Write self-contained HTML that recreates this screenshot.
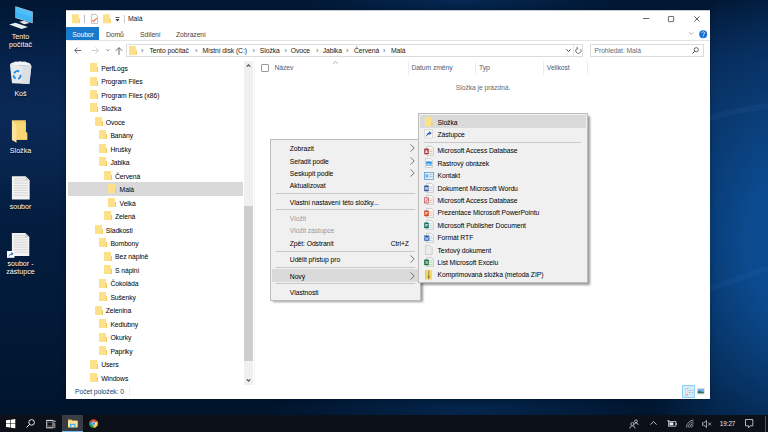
<!DOCTYPE html>
<html><head><meta charset="utf-8">
<style>
*{margin:0;padding:0;box-sizing:border-box}
html,body{width:768px;height:432px;overflow:hidden}
body{position:relative;font-family:"Liberation Sans",sans-serif;font-size:6.8px;letter-spacing:-0.08px;color:#000;
background:radial-gradient(ellipse 200px 30px at 470px 410px,rgba(5,42,85,0.8) 0%,rgba(5,42,85,0) 100%),radial-gradient(ellipse 160px 25px at 460px 0px,rgba(6,44,90,0.8) 0%,rgba(6,44,90,0) 100%),radial-gradient(ellipse 200px 270px at 805px 240px,rgba(12,77,146,1) 0%,rgba(11,74,142,1) 30%,rgba(9,62,120,0.75) 60%,rgba(8,40,80,0) 100%),linear-gradient(180deg,#011733 0px,#06234c 60px,#0a2955 115px,#07244c 170px,#041d40 216px,#021a38 320px,#00142c 414px)}
.a{position:absolute;white-space:nowrap}
svg{position:absolute;overflow:visible}
/* desktop */
.dl{color:#fff;text-align:center;width:41px;line-height:8.4px;font-size:7.1px;letter-spacing:0;text-shadow:0 0.5px 1px rgba(0,0,0,0.8)}
/* window */
#win{position:absolute;left:66px;top:10px;width:644px;height:389px;background:#fff;border-top:1px solid #c8ccd0;box-shadow:0 0 6px rgba(0,0,0,0.25)}
.tab{line-height:13px;color:#444}
.nav{line-height:13.5px;color:#000}
.mi{line-height:13.2px;color:#000}
.dis{color:#9a9a9a}
.fo{position:absolute;width:7px;height:9px;background:#fde08a}
.fo:after{content:"";position:absolute;left:7px;top:4px;width:1px;height:5px;background:#f0c860}
.bc{top:44.5px;line-height:12.5px;color:#555;font-size:7.4px}
.bct{top:44.5px;line-height:12.5px;color:#1a1a1a}
.hd{top:62px;line-height:12px;color:#4c607a}
.sep{position:absolute;height:1px;background:#c8c8c8}
</style></head><body>

<svg style="left:700px;top:60px" width="68" height="260" viewBox="0 0 68 260"><path d="M0,62 Q30,50 68,46" fill="none" stroke="rgba(110,170,240,0.06)" stroke-width="6"/><path d="M0,232 Q34,220 68,208" fill="none" stroke="rgba(110,170,240,0.06)" stroke-width="6"/></svg>
<!-- Desktop icons -->
<svg style="left:5px;top:3px" width="32" height="30" viewBox="0 0 32 30">
  <polygon points="10.4,3.3 27.8,8.8 27.6,20.3 10.4,15.1" fill="#c8d4de"/>
  <polygon points="10.9,4 27.3,9.2 27.1,19.6 10.9,14.6" fill="#40b5f5"/>
  <polygon points="10.9,4 27.3,9.2 27.1,14 10.9,9" fill="#5cc4fa" opacity="0.6"/>
  <polygon points="14.2,18.75 19.1,17.7 24.65,20.1 19.1,21.2" fill="#e4e8ec"/>
  <polygon points="4.2,21.5 10.4,19.8 22.9,24 16.7,26" fill="#e9ecef"/>
</svg>
<div class="a dl" style="left:0px;top:33px">Tento<br>počítač</div>

<svg style="left:5px;top:58px" width="32" height="30" viewBox="0 0 32 30">
  <polygon points="4.9,6.6 26.4,8 24.3,26 7,25.3" fill="#e6e9ec"/>
  <polygon points="17,7.4 26.4,8 24.3,26 17,25.6" fill="#dce0e4"/>
  <path d="M5,6.8 Q6,4.5 8.5,4.6 Q10,3 12.5,3.8 Q15,2.6 17.5,3.8 Q20,3 22,4.6 Q25,4.6 26.4,8Z" fill="#f4f5f6"/>
  <g fill="none" stroke="#1b88e2" stroke-width="1.8">
    <path d="M9.2,15.3 A3.9,3.9 0 0 1 14.2,13.3"/>
    <path d="M15.6,16.8 A3.9,3.9 0 0 1 13.2,20.8"/>
    <path d="M10.6,20.6 A3.9,3.9 0 0 1 8.7,17.2"/>
  </g>
</svg>
<div class="a dl" style="left:0px;top:89.5px">Koš</div>

<svg style="left:5px;top:115px" width="32" height="30" viewBox="0 0 32 30">
  <polygon points="6.9,5.2 20.8,5.2 20.8,17 22.2,18 22.2,24.7 11.1,24.7" fill="#f3cf66"/>
  <polygon points="11.5,8 20.8,8 20.8,17 22.2,18 22.2,24.7 11.5,24.7" fill="#f7d673"/>
  <polygon points="6.9,5.5 11.5,9 11.5,27.8 6.9,25" fill="#fde49c"/>
</svg>
<div class="a dl" style="left:0px;top:146.5px">Složka</div>

<svg style="left:11px;top:176px" width="19" height="24" viewBox="0 0 19 24">
  <polygon points="0.9,0.2 14.5,0.2 18.65,4.3 18.65,23.4 0.9,23.4" fill="#f3f3f3"/>
  <polygon points="14.5,0.2 18.65,4.3 14.5,4.3" fill="#d0d0d0"/>
  <g stroke="#d2d2d2" stroke-width="0.9"><line x1="2.9" y1="2.6" x2="14" y2="2.6"/><line x1="2.9" y1="4.7" x2="16.9" y2="4.7"/><line x1="2.9" y1="7.1" x2="16.9" y2="7.1"/><line x1="2.9" y1="9.6" x2="16.9" y2="9.6"/><line x1="2.9" y1="12" x2="16.9" y2="12"/><line x1="2.9" y1="14.4" x2="16.9" y2="14.4"/><line x1="2.9" y1="16.8" x2="16.9" y2="16.8"/><line x1="2.9" y1="19.3" x2="16.9" y2="19.3"/></g>
</svg>
<div class="a dl" style="left:0px;top:203px">soubor</div>

<svg style="left:11px;top:233px" width="19" height="24" viewBox="0 0 19 24">
  <polygon points="0.9,0 14.2,0 18.3,4.1 18.3,23 0.9,23" fill="#f3f3f3"/>
  <polygon points="14.2,0 18.3,4.1 14.2,4.1" fill="#d0d0d0"/>
  <g stroke="#d2d2d2" stroke-width="0.9"><line x1="2.9" y1="2.4" x2="14" y2="2.4"/><line x1="2.9" y1="4.5" x2="16.6" y2="4.5"/><line x1="2.9" y1="6.9" x2="16.6" y2="6.9"/><line x1="2.9" y1="9.4" x2="16.6" y2="9.4"/><line x1="2.9" y1="11.8" x2="16.6" y2="11.8"/><line x1="2.9" y1="14.2" x2="16.6" y2="14.2"/><line x1="2.9" y1="16.6" x2="16.6" y2="16.6"/><line x1="2.9" y1="19.1" x2="16.6" y2="19.1"/></g>
</svg>
<svg style="left:7px;top:251px" width="8" height="7" viewBox="0 0 8 7"><rect x="0" y="0" width="7.5" height="6.8" fill="#fff"/><path d="M1.5,6 Q1.8,2.8 4.5,2.5 L4.2,1 L6.6,2.6 L4.6,4.6 L4.5,3.6 Q2.8,3.8 1.5,6Z" fill="#1e66c8"/></svg>
<div class="a dl" style="left:0px;top:260px">soubor -<br>zástupce</div>

<!-- Explorer window -->
<div id="win"></div>
<!-- title bar -->
<svg style="left:72.3px;top:14.4px" width="9" height="10" viewBox="0 0 9 9.4"><rect x="0" y="0" width="6.8" height="9" fill="#fde08a"/><rect x="6.8" y="4.2" width="1" height="4.8" fill="#f0c860"/></svg>
<div class="a" style="left:84px;top:15px;width:1px;height:8px;background:#bbb"></div>
<svg style="left:91px;top:14.3px" width="7" height="10" viewBox="0 0 7 10"><polygon points="0.4,0.4 5,0.4 6.6,2 6.6,9.4 0.4,9.4" fill="#fff" stroke="#a8a8a8" stroke-width="0.7"/><path d="M1.2,6.2 L2.6,7.4 L5.8,4.2" fill="none" stroke="#f0703a" stroke-width="1.1"/></svg>
<svg style="left:103px;top:14.4px" width="9" height="10" viewBox="0 0 9 9.4"><rect x="0" y="0" width="6.8" height="9" fill="#fde08a"/><rect x="6.8" y="4.2" width="1" height="4.8" fill="#f0c860"/></svg>
<svg style="left:115px;top:17px" width="5" height="5" viewBox="0 0 5 5"><rect x="0.5" y="0" width="4" height="0.8" fill="#333"/><polygon points="0.5,2 4.5,2 2.5,4.5" fill="#333"/></svg>
<div class="a" style="left:124px;top:15px;width:1px;height:8px;background:#ccc"></div>
<div class="a" style="left:128px;top:12px;line-height:13px;color:#222">Malá</div>
<svg style="left:642.5px;top:18.3px" width="7" height="2" viewBox="0 0 7 2"><rect x="0" y="0.15" width="6.2" height="0.8" fill="#444"/></svg>
<svg style="left:667.6px;top:15.6px" width="7" height="7" viewBox="0 0 7 7"><rect x="0.45" y="0.45" width="5.2" height="5.2" rx="0.4" fill="none" stroke="#444" stroke-width="0.8"/></svg>
<svg style="left:693.5px;top:15.7px" width="7" height="7" viewBox="0 0 7 7"><path d="M0.3,0.3 L5.6,5.6 M5.6,0.3 L0.3,5.6" stroke="#333" stroke-width="0.8"/></svg>
<!-- ribbon tabs -->
<div class="a" style="left:66px;top:27px;width:32.5px;height:13px;background:#1979ca"></div>
<div class="a tab" style="left:72.3px;top:27.5px;color:#fff">Soubor</div>
<div class="a tab" style="left:106px;top:27.5px">Domů</div>
<div class="a tab" style="left:140px;top:27.5px">Sdílení</div>
<div class="a tab" style="left:176px;top:27.5px">Zobrazení</div>
<svg style="left:688.6px;top:32.3px" width="5" height="3" viewBox="0 0 5 3"><path d="M0.3,0.3 L2.3,2.4 L4.4,0.3" fill="none" stroke="#999" stroke-width="0.8"/></svg>
<svg style="left:699px;top:30px" width="9" height="9" viewBox="0 0 9 9"><circle cx="4.2" cy="4.2" r="4" fill="#1a73d2"/><path d="M2.9,3.2 Q2.9,1.8 4.3,1.8 Q5.7,1.8 5.7,3.1 Q5.7,3.9 4.6,4.5 L4.4,5.9" fill="none" stroke="#d8eafc" stroke-width="0.75"/><circle cx="4.4" cy="6.9" r="0.45" fill="#d8eafc"/></svg>
<div class="a" style="left:67px;top:40px;width:643px;height:1px;background:#e4e4e4"></div>
<!-- address bar -->
<svg style="left:73.8px;top:47px" width="8" height="7" viewBox="0 0 8 7"><path d="M7.2,3.5 L0.9,3.5 M3.5,0.7 L0.7,3.5 L3.5,6.3" fill="none" stroke="#6a6a6a" stroke-width="1"/></svg>
<svg style="left:91px;top:47px" width="8" height="7" viewBox="0 0 8 7"><path d="M0.5,3.5 L7.2,3.5 M4.5,0.5 L7.5,3.5 L4.5,6.5" fill="none" stroke="#c8c8c8" stroke-width="0.9"/></svg>
<svg style="left:106px;top:49.4px" width="4" height="3" viewBox="0 0 4 3"><path d="M0.5,0.5 L1.8,1.8 L3.1,0.5" fill="none" stroke="#666" stroke-width="0.9"/></svg>
<svg style="left:115px;top:47px" width="8" height="8" viewBox="0 0 8 8"><path d="M4,7.8 L4,0.8 M0.8,3.8 L4,0.6 L7.2,3.8" fill="none" stroke="#555" stroke-width="0.9"/></svg>
<div class="a" style="left:126px;top:44px;width:457px;height:13px;border:1px solid #dcdcdc"></div>
<svg style="left:129px;top:46px" width="9" height="9" viewBox="0 0 9 9"><rect x="0" y="0" width="6.8" height="9" fill="#fde08a"/><rect x="6.8" y="4.2" width="1" height="4.8" fill="#f0c860"/></svg>
<div class="a" style="left:572.5px;top:45px;width:1px;height:11.5px;background:#e6e6e6"></div>
<svg style="left:566px;top:49.2px" width="5" height="3" viewBox="0 0 5 3"><path d="M0.4,0.4 L2.5,2.5 L4.6,0.4" fill="none" stroke="#444" stroke-width="0.95"/></svg>
<svg style="left:575px;top:46.5px" width="7" height="7" viewBox="0 0 7 7"><path d="M5.6,2.2 A2.7,2.7 0 1 1 2.2,1.3" fill="none" stroke="#555" stroke-width="0.8"/><path d="M1.5,0 L3.2,1.3 L1.6,2.8" fill="none" stroke="#555" stroke-width="0.8"/></svg>
<div class="a" style="left:589.5px;top:44px;width:114px;height:13px;border:1px solid #dcdcdc"></div>
<div class="a" style="left:594.5px;top:44.5px;line-height:12.5px;color:#6d6d6d">Prohledat: Malá</div>
<svg style="left:692px;top:47px" width="7" height="7" viewBox="0 0 7 7"><circle cx="4.3" cy="2.7" r="2.1" fill="none" stroke="#444" stroke-width="0.8"/><path d="M2.8,4.2 L0.5,6.5" stroke="#444" stroke-width="0.9"/></svg>
<!-- breadcrumb -->
<div class="a bc" style="left:141px">›</div>
<div class="a bct" style="left:149.4px">Tento počítač</div>
<div class="a bc" style="left:195px">›</div>
<div class="a bct" style="left:202.5px">Místní disk (C:)</div>
<div class="a bc" style="left:252.5px">›</div>
<div class="a bct" style="left:259.8px">Složka</div>
<div class="a bc" style="left:284.5px">›</div>
<div class="a bct" style="left:290.8px">Ovoce</div>
<div class="a bc" style="left:316px">›</div>
<div class="a bct" style="left:322.7px">Jablka</div>
<div class="a bc" style="left:346px">›</div>
<div class="a bct" style="left:354px">Červená</div>
<div class="a bc" style="left:383px">›</div>
<div class="a bct" style="left:391px">Malá</div>
<!-- nav pane -->
<div class="a" style="left:68px;top:182px;width:175px;height:13.5px;background:#d9d9d9"></div>
<div class="fo" style="left:90.0px;top:63.0px"></div><div class="a nav" style="left:101.2px;top:61.7px">PerfLogs</div>
<div class="fo" style="left:90.0px;top:76.5px"></div><div class="a nav" style="left:101.2px;top:75.2px">Program Files</div>
<div class="fo" style="left:90.0px;top:90.0px"></div><div class="a nav" style="left:101.2px;top:88.7px">Program Files (x86)</div>
<div class="fo" style="left:90.0px;top:103.4px"></div><div class="a nav" style="left:101.2px;top:102.1px">Složka</div>
<div class="fo" style="left:94.6px;top:116.9px"></div><div class="a nav" style="left:105.8px;top:115.6px">Ovoce</div>
<div class="fo" style="left:99.2px;top:130.4px"></div><div class="a nav" style="left:110.4px;top:129.1px">Banány</div>
<div class="fo" style="left:99.2px;top:143.9px"></div><div class="a nav" style="left:110.4px;top:142.6px">Hrušky</div>
<div class="fo" style="left:99.2px;top:157.4px"></div><div class="a nav" style="left:110.4px;top:156.1px">Jablka</div>
<div class="fo" style="left:103.8px;top:170.8px"></div><div class="a nav" style="left:115.0px;top:169.5px">Červená</div>
<div class="fo" style="left:108.4px;top:184.3px"></div><div class="a nav" style="left:119.6px;top:183.0px">Malá</div>
<div class="fo" style="left:108.4px;top:197.8px"></div><div class="a nav" style="left:119.6px;top:196.5px">Velká</div>
<div class="fo" style="left:103.8px;top:211.3px"></div><div class="a nav" style="left:115.0px;top:210.0px">Zelená</div>
<div class="fo" style="left:94.6px;top:224.8px"></div><div class="a nav" style="left:105.8px;top:223.5px">Sladkosti</div>
<div class="fo" style="left:99.2px;top:238.2px"></div><div class="a nav" style="left:110.4px;top:236.9px">Bombony</div>
<div class="fo" style="left:103.8px;top:251.7px"></div><div class="a nav" style="left:115.0px;top:250.4px">Bez náplně</div>
<div class="fo" style="left:103.8px;top:265.2px"></div><div class="a nav" style="left:115.0px;top:263.9px">S náplní</div>
<div class="fo" style="left:99.2px;top:278.7px"></div><div class="a nav" style="left:110.4px;top:277.4px">Čokoláda</div>
<div class="fo" style="left:99.2px;top:292.2px"></div><div class="a nav" style="left:110.4px;top:290.9px">Sušenky</div>
<div class="fo" style="left:94.6px;top:305.6px"></div><div class="a nav" style="left:105.8px;top:304.3px">Zelenina</div>
<div class="fo" style="left:99.2px;top:319.1px"></div><div class="a nav" style="left:110.4px;top:317.8px">Kedlubny</div>
<div class="fo" style="left:99.2px;top:332.6px"></div><div class="a nav" style="left:110.4px;top:331.3px">Okurky</div>
<div class="fo" style="left:99.2px;top:346.1px"></div><div class="a nav" style="left:110.4px;top:344.8px">Papriky</div>
<div class="fo" style="left:90.0px;top:359.6px"></div><div class="a nav" style="left:101.2px;top:358.3px">Users</div>
<div class="fo" style="left:90.0px;top:373.0px"></div><div class="a nav" style="left:101.2px;top:371.7px">Windows</div>
<div class="a" style="left:244px;top:61px;width:9px;height:324px;background:#f0f0f0"></div>
<div class="a" style="left:244px;top:205.5px;width:9px;height:155px;background:#cdcdcd"></div>
<svg style="left:246.3px;top:64.2px" width="5" height="3" viewBox="0 0 5 3"><path d="M0.7,2.6 L2.5,0.8 L4.3,2.6" fill="none" stroke="#505050" stroke-width="1.2"/></svg>
<svg style="left:246.3px;top:378.8px" width="5" height="3" viewBox="0 0 5 3"><path d="M0.7,0.4 L2.5,2.2 L4.3,0.4" fill="none" stroke="#505050" stroke-width="1.2"/></svg>
<div class="a" style="left:253.5px;top:58px;width:1px;height:327px;background:#f4f4f4"></div>
<!-- content header -->
<div class="a" style="left:260.5px;top:64px;width:8.5px;height:8px;border:1px solid #9a9a9a;background:#fff;border-radius:1px"></div>
<div class="a hd" style="left:274.4px">Název</div>
<svg style="left:332.5px;top:61px" width="5" height="3" viewBox="0 0 5 3"><path d="M0.3,2.7 L2.5,0.5 L4.7,2.7" fill="none" stroke="#888" stroke-width="0.7"/></svg>
<div class="a" style="left:407.5px;top:60.5px;width:1px;height:14px;background:#ececec"></div>
<div class="a hd" style="left:411.5px">Datum změny</div>
<div class="a" style="left:475px;top:60.5px;width:1px;height:14px;background:#ececec"></div>
<div class="a hd" style="left:479px">Typ</div>
<div class="a" style="left:542.5px;top:60.5px;width:1px;height:14px;background:#ececec"></div>
<div class="a hd" style="left:546.8px">Velikost</div>
<div class="a" style="left:587px;top:60.5px;width:1px;height:14px;background:#ececec"></div>
<div class="a" style="left:455.8px;top:81.5px;line-height:12px;color:#6d6d6d">Složka je prázdná.</div>
<!-- status bar -->
<div class="a" style="left:75px;top:385.5px;line-height:12px;color:#1e3f6a">Počet položek: 0</div>
<div class="a" style="left:129px;top:387px;width:1px;height:9px;background:#eee"></div>
<div class="a" style="left:682.2px;top:385px;width:12.8px;height:13.4px;background:#d5ecfb;border:1px solid #8fd0f6"></div>
<svg style="left:684.5px;top:387.5px" width="9" height="9" viewBox="0 0 9 9"><rect x="0.4" y="0.4" width="2.4" height="7.4" fill="#eef4f8" stroke="#b8bcc0" stroke-width="0.5"/><rect x="0.9" y="5.8" width="1.4" height="1.6" fill="#f0b0a8"/><g fill="#a0a8b0"><rect x="3.6" y="2" width="2" height="0.6"/><rect x="6.4" y="2" width="2" height="0.6"/><rect x="3.6" y="4" width="2" height="0.6"/><rect x="6.4" y="4" width="2" height="0.6"/></g><g fill="#c8d0d8"><rect x="3.6" y="6" width="2" height="0.5"/><rect x="6.4" y="6" width="2" height="0.5"/></g></svg>
<svg style="left:697px;top:388px" width="8" height="6.5" viewBox="0 0 8 6.5"><rect x="0" y="0" width="8" height="6.5" fill="#e4e4e4"/><rect x="0.8" y="0.9" width="6.2" height="4.3" fill="#6eb0e8"/><path d="M0.8,3.2 Q3,2.6 7,4.6 L7,5.2 L0.8,5.2Z" fill="#3a6a50"/></svg>
<!-- context menu -->
<div class="a" style="left:273px;top:142px;width:150px;height:160px;background:rgba(0,0,0,0.4);filter:blur(0.8px)"></div>
<div class="a" style="left:270px;top:139px;width:151px;height:161.5px;background:#f0f0f0;border:1px solid #bcbcbc"></div>
<div class="a" style="left:271.5px;top:269px;width:148px;height:12.6px;background:#dadada"></div>
<div class="a mi" style="left:289.8px;top:142.1px">Zobrazit</div>
<svg style="left:410.3px;top:144.2px" width="5" height="8" viewBox="0 0 5 8"><path d="M0.6,0.4 L4.2,4 L0.6,7.6" fill="none" stroke="#5c5c78" stroke-width="0.85"/></svg>
<div class="a mi" style="left:289.8px;top:154.5px">Seřadit podle</div>
<svg style="left:410.3px;top:156.6px" width="5" height="8" viewBox="0 0 5 8"><path d="M0.6,0.4 L4.2,4 L0.6,7.6" fill="none" stroke="#5c5c78" stroke-width="0.85"/></svg>
<div class="a mi" style="left:289.8px;top:167.0px">Seskupit podle</div>
<svg style="left:410.3px;top:169.1px" width="5" height="8" viewBox="0 0 5 8"><path d="M0.6,0.4 L4.2,4 L0.6,7.6" fill="none" stroke="#5c5c78" stroke-width="0.85"/></svg>
<div class="a mi" style="left:289.8px;top:179.4px">Aktualizovat</div>
<div class="a mi" style="left:289.8px;top:195.9px">Vlastní nastavení této složky...</div>
<div class="a mi" style="left:289.8px;top:253.1px">Udělit přístup pro</div>
<svg style="left:410.3px;top:255.2px" width="5" height="8" viewBox="0 0 5 8"><path d="M0.6,0.4 L4.2,4 L0.6,7.6" fill="none" stroke="#5c5c78" stroke-width="0.85"/></svg>
<div class="a mi" style="left:289.8px;top:269.5px">Nový</div>
<svg style="left:410.3px;top:271.6px" width="5" height="8" viewBox="0 0 5 8"><path d="M0.6,0.4 L4.2,4 L0.6,7.6" fill="none" stroke="#5c5c78" stroke-width="0.85"/></svg>
<div class="a mi" style="left:289.8px;top:285.6px">Vlastnosti</div>
<div class="a mi dis" style="left:289.8px;top:212.0px">Vložit</div>
<div class="a mi dis" style="left:289.8px;top:224.4px">Vložit zástupce</div>
<div class="a mi" style="left:289.8px;top:236.8px">Zpět: Odstranit</div>
<div class="a mi" style="left:390.7px;top:236.8px">Ctrl+Z</div>
<div class="sep" style="left:276px;top:193.0px;width:139px"></div>
<div class="sep" style="left:276px;top:209.3px;width:139px"></div>
<div class="sep" style="left:276px;top:250.7px;width:139px"></div>
<div class="sep" style="left:276px;top:267.0px;width:139px"></div>
<div class="sep" style="left:276px;top:282.7px;width:139px"></div>
<!-- submenu -->
<div class="a" style="left:420.5px;top:116px;width:169px;height:168.5px;background:rgba(0,0,0,0.4);filter:blur(0.8px)"></div>
<div class="a" style="left:417.5px;top:113px;width:170.5px;height:170px;background:#f0f0f0;border:1px solid #bcbcbc"></div>
<div class="a" style="left:420px;top:115.4px;width:166px;height:12.3px;background:#dadada"></div>
<div class="sep" style="left:424px;top:141.5px;width:157px"></div>
<svg style="left:424.90000000000003px;top:117.3px" width="8" height="10" viewBox="0 0 8 10"><rect x="0" y="0" width="6.5" height="9.4" fill="#fde08a"/><rect x="6.5" y="4" width="1" height="5.4" fill="#f0c860"/></svg>
<svg style="left:424.40000000000003px;top:129.0px" width="9" height="10" viewBox="0 0 9 10"><rect x="0.4" y="0.4" width="8.2" height="8.6" fill="#f6f6f6" stroke="#cfcfcf" stroke-width="0.6"/><path d="M2.2,8 Q2.3,4.2 5.3,3.6 L5,2 L7.6,4 L5.4,6.3 L5.3,5 Q3.5,5.3 2.2,8Z" fill="#1e5fb4"/></svg>
<svg style="left:423.8px;top:145.7px" width="10" height="10" viewBox="0 0 10 10"><polygon points="2.6,0.4 7.6,0.4 9.4,2.2 9.4,9.4 2.6,9.4" fill="#f8f8f8" stroke="#b4b4b4" stroke-width="0.6"/><rect x="5.4" y="3.6" width="3" height="0.6" fill="#e0a0a0"/><rect x="5.4" y="5.4" width="3" height="0.6" fill="#e0a0a0"/><rect x="5.4" y="7.2" width="3" height="0.6" fill="#e0a0a0"/><rect x="0.2" y="2.6" width="4.6" height="5.6" rx="0.4" fill="#a4373a"/><text x="2.5" y="6.9" font-size="4" font-family="Liberation Sans" font-weight="bold" fill="#fff" text-anchor="middle">A</text></svg>
<svg style="left:425.0px;top:158.1px" width="8" height="10" viewBox="0 0 8 10"><polygon points="0.4,0.4 5.2,0.4 7.4,2.6 7.4,9.4 0.4,9.4" fill="#fafafa" stroke="#b4b4b4" stroke-width="0.6"/><rect x="1.2" y="3.4" width="5.4" height="4.4" fill="#2a8ae0"/><path d="M1.2,6.2 L3.5,5 L6.6,6.5 L6.6,7.8 L1.2,7.8Z" fill="#9fd0f8"/></svg>
<svg style="left:423.8px;top:172.0px" width="10" height="8" viewBox="0 0 10 8"><rect x="0.4" y="0.4" width="9.2" height="7" fill="#e4f1fa" stroke="#4a90c8" stroke-width="0.7"/><rect x="1.5" y="2.2" width="2.8" height="3.4" fill="#7ab0dc"/><rect x="5.2" y="2.4" width="3.4" height="0.7" fill="#7ab0dc"/><rect x="5.2" y="4.4" width="3.4" height="0.7" fill="#7ab0dc"/></svg>
<svg style="left:423.8px;top:182.9px" width="10" height="10" viewBox="0 0 10 10"><polygon points="2.6,0.4 7.6,0.4 9.4,2.2 9.4,9.4 2.6,9.4" fill="#f8f8f8" stroke="#b4b4b4" stroke-width="0.6"/><rect x="5.4" y="3.6" width="3" height="0.6" fill="#a8bcdc"/><rect x="5.4" y="5.4" width="3" height="0.6" fill="#a8bcdc"/><rect x="5.4" y="7.2" width="3" height="0.6" fill="#a8bcdc"/><rect x="0.2" y="2.6" width="4.6" height="5.6" rx="0.4" fill="#2b579a"/><text x="2.5" y="6.9" font-size="4" font-family="Liberation Sans" font-weight="bold" fill="#fff" text-anchor="middle">W</text></svg>
<svg style="left:423.8px;top:195.3px" width="10" height="10" viewBox="0 0 10 10"><polygon points="2.6,0.4 7.6,0.4 9.4,2.2 9.4,9.4 2.6,9.4" fill="#f8f8f8" stroke="#b4b4b4" stroke-width="0.6"/><rect x="5.4" y="3.6" width="3" height="0.6" fill="#e0a0a0"/><rect x="5.4" y="5.4" width="3" height="0.6" fill="#e0a0a0"/><rect x="5.4" y="7.2" width="3" height="0.6" fill="#e0a0a0"/><rect x="0.5" y="2.8" width="4.2" height="5.2" fill="#f6e0e0" stroke="#c04a4a" stroke-width="0.7"/><path d="M1.5,7.2 L3.8,3.8" stroke="#c04a4a" stroke-width="0.8"/></svg>
<svg style="left:423.8px;top:207.7px" width="10" height="10" viewBox="0 0 10 10"><polygon points="2.6,0.4 7.6,0.4 9.4,2.2 9.4,9.4 2.6,9.4" fill="#f8f8f8" stroke="#b4b4b4" stroke-width="0.6"/><rect x="5.4" y="3.6" width="3" height="0.6" fill="#eab0a0"/><rect x="5.4" y="5.4" width="3" height="0.6" fill="#eab0a0"/><rect x="5.4" y="7.2" width="3" height="0.6" fill="#eab0a0"/><rect x="0.2" y="2.6" width="4.6" height="5.6" rx="0.4" fill="#d24726"/><text x="2.5" y="6.9" font-size="4" font-family="Liberation Sans" font-weight="bold" fill="#fff" text-anchor="middle">P</text></svg>
<svg style="left:423.8px;top:220.1px" width="10" height="10" viewBox="0 0 10 10"><polygon points="2.6,0.4 7.6,0.4 9.4,2.2 9.4,9.4 2.6,9.4" fill="#f8f8f8" stroke="#b4b4b4" stroke-width="0.6"/><rect x="5.4" y="3.6" width="3" height="0.6" fill="#98c8c0"/><rect x="5.4" y="5.4" width="3" height="0.6" fill="#98c8c0"/><rect x="5.4" y="7.2" width="3" height="0.6" fill="#98c8c0"/><rect x="0.2" y="2.6" width="4.6" height="5.6" rx="0.4" fill="#077568"/><text x="2.5" y="6.9" font-size="4" font-family="Liberation Sans" font-weight="bold" fill="#fff" text-anchor="middle">P</text></svg>
<svg style="left:423.8px;top:232.5px" width="10" height="10" viewBox="0 0 10 10"><polygon points="2.6,0.4 7.6,0.4 9.4,2.2 9.4,9.4 2.6,9.4" fill="#f8f8f8" stroke="#b4b4b4" stroke-width="0.6"/><rect x="5.4" y="3.6" width="3" height="0.6" fill="#a8bcdc"/><rect x="5.4" y="5.4" width="3" height="0.6" fill="#a8bcdc"/><rect x="5.4" y="7.2" width="3" height="0.6" fill="#a8bcdc"/><rect x="0.2" y="2.4" width="5.2" height="5.4" fill="#3060b8"/><path d="M1,3.6 L2,6.8 L2.8,4.8 L3.6,6.8 L4.6,3.6" fill="none" stroke="#fff" stroke-width="0.6"/></svg>
<svg style="left:425.2px;top:244.9px" width="8" height="10" viewBox="0 0 8 10"><polygon points="0.4,0.4 5,0.4 7.2,2.6 7.2,9.4 0.4,9.4" fill="#ebebeb" stroke="#bdbdbd" stroke-width="0.6"/></svg>
<svg style="left:423.8px;top:257.3px" width="10" height="10" viewBox="0 0 10 10"><polygon points="2.6,0.4 7.6,0.4 9.4,2.2 9.4,9.4 2.6,9.4" fill="#e8f4ec" stroke="#b4b4b4" stroke-width="0.6"/><rect x="5.4" y="3.6" width="3" height="0.6" fill="#98c8a8"/><rect x="5.4" y="5.4" width="3" height="0.6" fill="#98c8a8"/><rect x="5.4" y="7.2" width="3" height="0.6" fill="#98c8a8"/><rect x="0.2" y="2.6" width="4.6" height="5.6" rx="0.4" fill="#1d7044"/><text x="2.5" y="6.9" font-size="4" font-family="Liberation Sans" font-weight="bold" fill="#fff" text-anchor="middle">X</text></svg>
<svg style="left:425.0px;top:269.7px" width="8" height="10" viewBox="0 0 8 10"><rect x="0" y="0.2" width="7" height="9.2" fill="#fbd862"/><rect x="0" y="0.2" width="1.2" height="9.2" fill="#f2c84a"/><rect x="3.2" y="0.2" width="1" height="9.2" fill="#9a8a60"/><rect x="2.8" y="5.5" width="1.8" height="2.2" fill="#8a7a50"/></svg>
<div class="a mi" style="left:437.5px;top:115.5px">Složka</div>
<div class="a mi" style="left:437.5px;top:127.7px">Zástupce</div>
<div class="a mi" style="left:437.5px;top:144.4px">Microsoft Access Database</div>
<div class="a mi" style="left:437.5px;top:156.8px">Rastrový obrázek</div>
<div class="a mi" style="left:437.5px;top:169.2px">Kontakt</div>
<div class="a mi" style="left:437.5px;top:181.6px">Dokument Microsoft Wordu</div>
<div class="a mi" style="left:437.5px;top:194.0px">Microsoft Access Database</div>
<div class="a mi" style="left:437.5px;top:206.4px">Prezentace Microsoft PowerPointu</div>
<div class="a mi" style="left:437.5px;top:218.8px">Microsoft Publisher Document</div>
<div class="a mi" style="left:437.5px;top:231.2px">Formát RTF</div>
<div class="a mi" style="left:437.5px;top:243.6px">Textový dokument</div>
<div class="a mi" style="left:437.5px;top:256.0px">List Microsoft Excelu</div>
<div class="a mi" style="left:437.5px;top:268.4px">Komprimovaná složka (metoda ZIP)</div>
<!-- Taskbar -->
<div class="a" style="left:0;top:415px;width:768px;height:17px;background:#0c1018"></div>
<div class="a" style="left:62px;top:415px;width:21px;height:17px;background:#393c42"></div>
<div class="a" style="left:62px;top:430.5px;width:21px;height:1.5px;background:#76b9ed"></div>
<svg style="left:5.5px;top:418.8px" width="10" height="10" viewBox="0 0 10 10"><path d="M0,1.3 L4,0.75 L4,4.4 L0,4.4Z M4.6,0.65 L9.3,0 L9.3,4.4 L4.6,4.4Z M0,5 L4,5 L4,8.6 L0,8.05Z M4.6,5 L9.3,5 L9.3,9.2 L4.6,8.7Z" fill="#fff"/></svg>
<svg style="left:26px;top:419px" width="9" height="9" viewBox="0 0 9 9"><circle cx="5.6" cy="3.4" r="2.8" fill="none" stroke="#fff" stroke-width="0.9"/><path d="M3.6,5.4 L0.5,8.5" stroke="#fff" stroke-width="1"/></svg>
<svg style="left:46px;top:419.5px" width="10" height="9" viewBox="0 0 10 9"><path d="M0.4,0.4 L7.2,0.4 M0.4,7.8 L7.2,7.8" stroke="#e8e8e8" stroke-width="1"/><path d="M0.5,0.4 L0.5,7.8 M7.2,0.4 L7.2,7.8" stroke="#e8e8e8" stroke-width="0.7"/><path d="M1.2,2.2 L6.5,2.2 L6.5,6 L1.2,6Z" fill="none" stroke="#9a9a9a" stroke-width="0.6"/><path d="M8.8,3 L8.8,8.2" stroke="#e8e8e8" stroke-width="0.7"/><circle cx="8.8" cy="1.3" r="0.8" fill="#e8e8e8"/></svg>
<svg style="left:67.7px;top:419px" width="10" height="9" viewBox="0 0 10 9"><path d="M0,0.4 L3.2,0.4 L4.2,1.5 L9.5,1.5 L9.5,8.3 L0,8.3Z" fill="#f3cf6a"/><rect x="0" y="2.2" width="9.5" height="6.1" fill="#fde39a"/><path d="M2,8.5 L2,4.8 L7.5,4.8 L7.5,8.5 L6.2,8.5 L6.2,6.1 L3.3,6.1 L3.3,8.5Z" fill="#3fb0f0"/></svg>
<svg style="left:88.5px;top:418.5px" width="9" height="9" viewBox="0 0 9 9"><circle cx="4.5" cy="4.5" r="4.3" fill="#db4437"/><path d="M4.5,4.5 L8.2,2.3 A4.3,4.3 0 0 1 2.4,8.3Z" fill="#0f9d58"/><path d="M4.5,4.5 L2.4,8.3 A4.3,4.3 0 0 1 0.8,2.3Z" fill="#0f9d58"/><path d="M4.5,4.5 L8.2,2.3 A4.3,4.3 0 0 1 4.7,8.8Z" fill="#ffcd40"/><circle cx="4.5" cy="4.5" r="2" fill="#fff"/><circle cx="4.5" cy="4.5" r="1.5" fill="#4285f4"/></svg>
<svg style="left:629px;top:418.5px" width="11" height="10" viewBox="0 0 11 10"><circle cx="3.4" cy="5" r="1.5" fill="none" stroke="#d8d8d8" stroke-width="0.75"/><path d="M0.7,9.5 Q1,6.9 3.4,6.7 Q5.8,6.9 6.1,9.5" fill="none" stroke="#d8d8d8" stroke-width="0.75"/><circle cx="7" cy="2.3" r="1.4" fill="none" stroke="#d8d8d8" stroke-width="0.75"/><path d="M5.4,5.5 Q5.6,4 7,3.9 Q8.8,4 9.2,6" fill="none" stroke="#d8d8d8" stroke-width="0.75"/></svg>
<svg style="left:650px;top:421px" width="7" height="4" viewBox="0 0 7 4"><path d="M0.4,3.6 L3.5,0.6 L6.6,3.6" fill="none" stroke="#ddd" stroke-width="0.8"/></svg>
<svg style="left:666.5px;top:420px" width="10" height="7" viewBox="0 0 10 7"><rect x="1.6" y="1.6" width="7.2" height="4.6" fill="none" stroke="#d8d8d8" stroke-width="0.75"/><rect x="2.4" y="2.4" width="4" height="3" fill="#e8e8e8"/><rect x="8.9" y="2.9" width="0.9" height="2" fill="#d8d8d8"/><path d="M0.2,0.6 L2.2,0.6 L3,1.6" fill="none" stroke="#d8d8d8" stroke-width="0.7"/></svg>
<svg style="left:685.5px;top:419px" width="8" height="9" viewBox="0 0 8 9"><path d="M0.5,8.5 A7.5,7.5 0 0 1 7.5,1 M2.2,8.5 A5.8,5.8 0 0 1 7.5,2.8 M3.9,8.5 A4,4 0 0 1 7.5,4.6 M5.6,8.5 A2.2,2.2 0 0 1 7.5,6.4" fill="none" stroke="#ddd" stroke-width="0.6"/></svg>
<svg style="left:702px;top:419.5px" width="10" height="8" viewBox="0 0 10 8"><path d="M0.5,2.8 L2,2.8 L4.5,0.5 L4.5,7.5 L2,5.2 L0.5,5.2Z" fill="none" stroke="#ddd" stroke-width="0.7"/><path d="M6.2,2.5 L9,5.5 M9,2.5 L6.2,5.5" stroke="#ddd" stroke-width="0.7"/></svg>
<div class="a" style="left:719.8px;top:417.5px;line-height:12px;color:#e8e8e8;font-size:6.3px;letter-spacing:-0.05px">19:27</div>
<svg style="left:744.8px;top:418.8px" width="9" height="10" viewBox="0 0 9 10"><path d="M0.5,0.5 L7.8,0.5 L7.8,6.8 L5,6.8 L3.4,8.8 L3.4,6.8 L0.5,6.8Z" fill="none" stroke="#ddd" stroke-width="0.8"/></svg>
<div class="a" style="left:765px;top:416px;width:1px;height:16px;background:#555"></div>


</body></html>
